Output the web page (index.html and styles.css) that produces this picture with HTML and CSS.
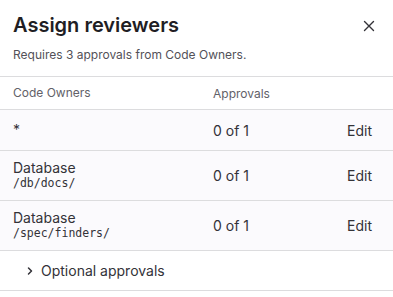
FILE: index.html
```html
<!DOCTYPE html>
<html>
<head>
<meta charset="utf-8">
<link rel="stylesheet" href="styles.css">
</head>
<body>
<div class="modal">
  <header class="head">
    <div class="head-text">
      <h2 class="title">Assign reviewers</h2>
      <p class="sub">Requires 3 approvals from Code Owners.</p>
    </div>
    <button class="close" aria-label="Close">
      <svg width="16" height="16" viewBox="0 0 16 16"><path d="M3.5 3.5l9 9M12.5 3.5l-9 9" stroke="#333238" stroke-width="1.4" stroke-linecap="round" fill="none"/></svg>
    </button>
  </header>
  <div class="table">
    <div class="row hrow">
      <div class="c1">Code Owners</div>
      <div class="c2">Approvals</div>
      <div class="c3"></div>
    </div>
    <div class="row brow short">
      <div class="c1">*</div>
      <div class="c2">0 of 1</div>
      <div class="c3">Edit</div>
    </div>
    <div class="row brow">
      <div class="c1"><div>Database</div><div class="mono">/db/docs/</div></div>
      <div class="c2">0 of 1</div>
      <div class="c3">Edit</div>
    </div>
    <div class="row brow">
      <div class="c1"><div>Database</div><div class="mono">/spec/finders/</div></div>
      <div class="c2">0 of 1</div>
      <div class="c3">Edit</div>
    </div>
  </div>
  <div class="optional">
    <svg class="chev" width="16" height="16" viewBox="0 0 16 16"><path d="M6.5 5l3 3-3 3" stroke="#333238" stroke-width="1.5" stroke-linecap="round" stroke-linejoin="round" fill="none"/></svg>
    <span>Optional approvals</span>
  </div>
</div>
</body>
</html>
```

FILE: styles.css
```css
html, body {
  margin: 0;
  padding: 0;
  background: #ffffff;
}
body {
  font-family: Inter, "Noto Sans", sans-serif;
  color: #333238;
}
.modal {
  width: 393px;
}
.head {
  display: flex;
  justify-content: space-between;
  align-items: flex-start;
  padding: 12px 16px 0 13px;
  height: 64px;
  border-bottom: 1px solid #dcdcde;
}
.title {
  margin: 0;
  font-size: 20px;
  line-height: 26px;
  font-weight: 600;
  color: #1f1e24;
}
.sub {
  margin: 9px 0 0;
  font-size: 12px;
  line-height: 16px;
  color: #535158;
}
.close {
  border: 0;
  background: none;
  padding: 0;
  margin-top: 6px;
  width: 16px;
  height: 16px;
  display: flex;
}
.row {
  display: grid;
  grid-template-columns: 200px 134px 1fr;
  align-items: center;
  padding: 0 13px;
  border-bottom: 1px solid #dcdcde;
}
.hrow {
  height: 32px;
  font-size: 12px;
  color: #626168;
}
.brow {
  height: 49px;
  background: #fbfafd;
  font-size: 14px;
}
.brow.short {
  height: 40px;
}
.c1 {
  line-height: 16px;
}
.mono {
  font-family: "DejaVu Sans Mono", monospace;
  font-size: 11.5px;
  line-height: 15px;
  color: #333238;
}
.optional {
  display: flex;
  align-items: center;
  gap: 3px;
  height: 39px;
  padding-left: 22px;
  font-size: 14px;
  border-bottom: 1px solid #dcdcde;
}
.chev {
  flex: none;
}
```
